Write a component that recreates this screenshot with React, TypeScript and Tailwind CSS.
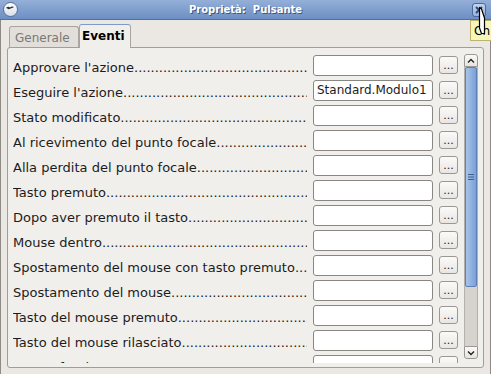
import React from 'react';

const events = [
  { label: "Approvare l'azione", value: '' },
  { label: "Eseguire l'azione", value: 'Standard.Modulo1' },
  { label: 'Stato modificato', value: '' },
  { label: 'Al ricevimento del punto focale', value: '' },
  { label: 'Alla perdita del punto focale', value: '' },
  { label: 'Tasto premuto', value: '' },
  { label: 'Dopo aver premuto il tasto', value: '' },
  { label: 'Mouse dentro', value: '' },
  { label: 'Spostamento del mouse con tasto premuto', value: '' },
  { label: 'Spostamento del mouse', value: '' },
  { label: 'Tasto del mouse premuto', value: '' },
  { label: 'Tasto del mouse rilasciato', value: '' },
  { label: 'Mouse fuori', value: '' },
];

const DOTS = '.'.repeat(90);

function EventRow({ label, value }: { label: string; value: string }) {
  return (
    <div className="flex h-[25px] shrink-0 items-start">
      <div className="flex w-[294px] overflow-hidden whitespace-nowrap pt-[5px] text-[13px] leading-[15px] text-[#1c1c1c]">
        <span>{label}</span>
        <span className="min-w-0 flex-1 overflow-hidden">{DOTS}</span>
      </div>
      <div className="ml-[6px] h-[21px] w-[120px] overflow-hidden whitespace-nowrap rounded-[3px] border border-[#8a8782] bg-white px-[3px] pt-[2px] leading-[14px] text-[#1c1c1c]">
        {value}
      </div>
      <button className="ml-[6px] mt-px flex h-[18px] w-[19px] items-start justify-center overflow-hidden rounded-[3px] border border-[#9b9893] bg-gradient-to-b from-[#fbfaf9] to-[#e9e6e2] pt-[2px] text-[11px] leading-[14px] text-[#222]">
        ...
      </button>
    </div>
  );
}

function Scrollbar() {
  return (
    <div className="flex h-[305px] w-[14px] flex-col">
      <div className="flex h-[13px] items-center justify-center rounded-t-[3px] border border-[#9b9893] bg-gradient-to-b from-[#fbfaf9] to-[#e6e3df]">
        <svg width="8" height="6" viewBox="0 0 8 6">
          <path d="M1 4.5 L4 1.5 L7 4.5" fill="none" stroke="#222" strokeWidth="1.4" />
        </svg>
      </div>
      <div className="flex flex-1 flex-col border-x border-[#b3afaa] bg-[#d6d3ce]">
        <div className="flex h-[220px] items-center justify-center rounded-[2px] border border-[#5b80b8] bg-gradient-to-r from-[#a9c4ea] to-[#7aa0d6]">
          <svg width="6" height="8" viewBox="0 0 6 8">
            <path d="M0 1.5 H6 M0 4 H6 M0 6.5 H6" stroke="#3f5f90" strokeWidth="1" />
          </svg>
        </div>
      </div>
      <div className="flex h-[13px] items-center justify-center rounded-b-[3px] border border-[#9b9893] bg-gradient-to-b from-[#fbfaf9] to-[#e6e3df]">
        <svg width="8" height="6" viewBox="0 0 8 6">
          <path d="M1 1.5 L4 4.5 L7 1.5" fill="none" stroke="#222" strokeWidth="1.4" />
        </svg>
      </div>
    </div>
  );
}

export default function App() {
  return (
    <div className="relative flex h-[374px] w-[491px] flex-col overflow-hidden bg-[#ebe8e4] font-['DejaVu_Sans',sans-serif] text-[12px]">
      {/* Title bar */}
      <div className="relative flex h-[20px] shrink-0 items-center justify-center border-b border-[#52709e] bg-gradient-to-b from-[#94afd8] to-[#6d8fc3]">
        <div className="absolute left-[3px] top-[2px] h-[15px] w-[15px] rounded-full border border-[#56709a] bg-gradient-to-b from-[#ffffff] to-[#d8dde8]">
          <svg width="13" height="13" viewBox="0 0 13 13" className="absolute left-0 top-0">
            <path d="M2 5 Q4 3 6 4.5 Q8 3 10 4 Q8 5 6.5 5.5 Q5 6.5 4 6 Q3 5 2 5 Z" fill="#2b2f3a" />
          </svg>
        </div>
        <span className="text-[10px] font-bold text-white [text-shadow:1px_1px_0_#3c5680]">Proprietà:&nbsp; Pulsante</span>
        <div className="absolute left-[472px] top-[3px] flex h-[14px] w-[14px] items-center justify-center rounded-[3px] border border-[#4a6898] bg-gradient-to-b from-[#c3d4ec] to-[#9ab3da]">
          <svg width="10" height="10" viewBox="0 0 10 10">
            <path d="M2 2 L8 8 M8 2 L2 8" stroke="#2e4770" strokeWidth="1.8" />
          </svg>
        </div>
      </div>

      {/* Body */}
      <div className="flex flex-1 flex-col border-x border-b border-[#8e8b87] px-[6px] pb-[6px]">
        {/* Tabs */}
        <div className="flex h-[27px] shrink-0 items-end pl-[2px]">
          <div className="mb-[-1px] flex h-[22px] w-[70px] items-center rounded-t-[3px] border border-b-0 border-[#a8a49f] bg-[#e2ded9] pl-[5px] text-[#7a7875]">
            Generale
          </div>
          <div className="relative z-10 mb-[-1px] flex h-[24px] w-[52px] items-center rounded-t-[3px] border border-b-0 border-[#a8a49f] border-t-[#7d9acb] bg-[#f1efec] pl-[2px] pb-px font-bold text-black">
            Eventi
          </div>
        </div>

        {/* Panel */}
        <div className="flex h-[321px] shrink-0 rounded-[3px] border border-[#a19d98] bg-[#f1efec] pl-[5px] pr-[5px] pt-[6px]">
          <div className="flex h-[309px] flex-1 flex-col overflow-hidden pt-px">
            {events.map((e) => (
              <EventRow key={e.label} label={e.label} value={e.value} />
            ))}
          </div>
          <Scrollbar />
        </div>
      </div>

      {/* Tooltip */}
      <div className="absolute left-[470px] top-[20px] h-[21px] w-[30px] border border-[#b9b56e] bg-[#f7f5b9] pl-[3px] pt-[3px] text-[12px] leading-[14px] text-black">
        Ch
      </div>

      {/* Mouse pointer */}
      <svg className="absolute left-[477px] top-[6px]" width="11" height="30" viewBox="0 0 11 30">
        <path d="M2.5 1.5 L2.5 22 L4.5 27.5 L7.5 27.5 L7.5 12 L4.5 3 Z" fill="#ffffff" stroke="#000" strokeWidth="1.2" strokeLinejoin="round" />
      </svg>
    </div>
  );
}
